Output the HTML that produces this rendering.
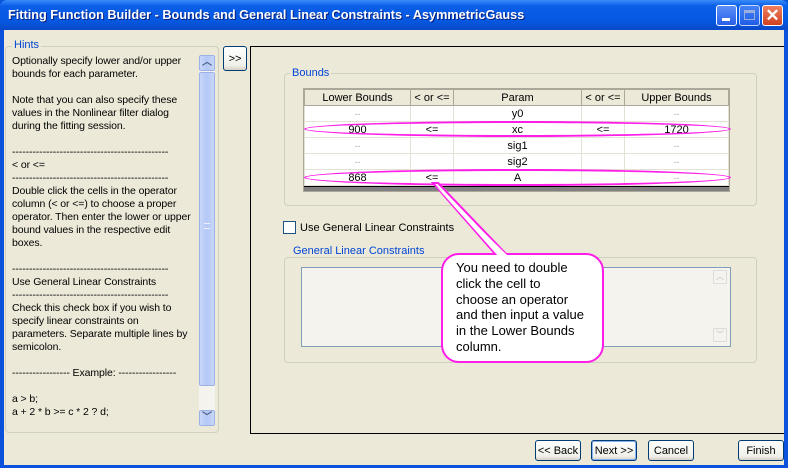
<!DOCTYPE html>
<html><head><meta charset="utf-8"><style>
*{box-sizing:border-box;margin:0;padding:0}
body{width:788px;height:468px;overflow:hidden;background:#0a52dc;font-family:"Liberation Sans",sans-serif;font-size:11px;color:#000;position:relative}
.a{position:absolute}
#title{left:0;top:0;width:788px;height:30px;background:linear-gradient(#3a8cf8,#0a5ee8 20%,#0558e0 70%,#0a48c8);border-radius:7px 7px 0 0}
#client{left:4px;top:30px;width:780px;height:435px;background:#ece9d8}
.grp{border:1px solid #d0d0bf;border-radius:4px}
.lbl{background:#ece9d8;color:#0046d5;padding:0 2px;font-size:11px;line-height:12px}
.btn{border:1px solid #003c74;border-radius:3px;background:linear-gradient(#fff,#f0f0ea 80%,#d6d0c5);font-size:11px;display:flex;align-items:center;justify-content:center}
.sb{background:linear-gradient(90deg,#c8d6f8,#b4c8f6 50%,#c8d6f8);border:1px solid #9cb2e6;border-radius:2px}
table{border-collapse:collapse;font-size:11px}
td{border:1px solid #e4e2d5;height:16px;text-align:center;line-height:14px;padding:0}
th{font-weight:normal;background:#ece9d8;border:1px solid #aca899;height:16px;line-height:14px;border-bottom:1px solid #aca899}
.d{color:#b0b0b0;font-size:9px}
.ttl{color:#fff;font-weight:bold;font-size:12.7px;left:8px;top:8px;text-shadow:1px 1px #0a1e7a}
.tb{top:5px;width:21px;height:21px;border:1px solid #fff;border-radius:3px}
</style></head><body>
<div id="title" class="a"></div>
<div class="a ttl">Fitting Function Builder - Bounds and General Linear Constraints - AsymmetricGauss</div>
<div class="a tb" style="left:716px;background:linear-gradient(#5a8ef8,#2860e8)"><div class="a" style="left:5px;top:12px;width:8px;height:3px;background:#fff"></div></div>
<div class="a tb" style="left:739px;background:linear-gradient(#5a8ef8,#2860e8);opacity:.75"><div class="a" style="left:4px;top:4px;width:11px;height:10px;border:1px solid #ccd;border-top-width:3px"></div></div>
<div class="a tb" style="left:762px;background:linear-gradient(#f08060,#d04020);color:#fff;font-size:17px;font-weight:bold;text-align:center;line-height:19px">✕</div>
<div id="client" class="a"></div>

<!-- Hints -->
<div class="a grp" style="left:5px;top:46px;width:214px;height:387px"></div>
<div class="a lbl" style="left:12px;top:39px">Hints</div>
<div class="a" style="left:12px;top:55px;width:186px;line-height:13px;font-size:10.5px;letter-spacing:-0.1px;white-space:pre;overflow:hidden;height:370px">Optionally specify lower and/or upper
bounds for each parameter.

Note that you can also specify these
values in the Nonlinear filter dialog
during the fitting session.

----------------------------------------------
&lt; or &lt;=
----------------------------------------------
Double click the cells in the operator
column (&lt; or &lt;=) to choose a proper
operator. Then enter the lower or upper
bound values in the respective edit
boxes.

----------------------------------------------
Use General Linear Constraints
----------------------------------------------
Check this check box if you wish to
specify linear constraints on
parameters. Separate multiple lines by
semicolon.

----------------- Example: -----------------

a &gt; b;
a + 2 * b &gt;= c * 2 ? d;</div>
<div class="a" style="left:199px;top:55px;width:16px;height:371px;background:#f4f3ee"></div>
<div class="a sb" style="left:199px;top:55px;width:16px;height:16px;text-align:center;color:#4d6185;font-size:10px;line-height:14px;font-weight:bold">︿</div>
<div class="a sb" style="left:199px;top:72px;width:16px;height:314px"><div class="a" style="left:4px;top:150px;width:6px;height:6px;border-top:1px solid #eef;border-bottom:1px solid #eef"></div></div>
<div class="a sb" style="left:199px;top:410px;width:16px;height:16px;text-align:center;color:#4d6185;font-size:10px;line-height:14px;font-weight:bold">﹀</div>

<div class="a btn" style="left:223px;top:46px;width:24px;height:25px">&gt;&gt;</div>

<!-- right panel -->
<div class="a" style="left:250px;top:46px;width:534px;height:388px;border:1px solid #000;border-right:none"></div>
<div class="a grp" style="left:284px;top:73px;width:473px;height:133px"></div>
<div class="a lbl" style="left:290px;top:67px">Bounds</div>
<div class="a" style="left:303px;top:88px;width:427px;height:104px;background:#808080;border:1px solid #aca899">
<table style="width:425px;background:#fff">
<tr><th style="width:106px">Lower Bounds</th><th style="width:43px">&lt; or &lt;=</th><th style="width:128px">Param</th><th style="width:43px">&lt; or &lt;=</th><th>Upper Bounds</th></tr>
<tr><td class="d">--</td><td></td><td>y0</td><td></td><td class="d">--</td></tr>
<tr><td>900</td><td>&lt;=</td><td>xc</td><td>&lt;=</td><td>1720</td></tr>
<tr><td class="d">--</td><td></td><td>sig1</td><td></td><td class="d">--</td></tr>
<tr><td class="d">--</td><td></td><td>sig2</td><td></td><td class="d">--</td></tr>
<tr><td>868</td><td>&lt;=</td><td>A</td><td></td><td class="d">--</td></tr>
</table>
<div style="height:1px;background:#000"></div>
</div>
<div class="a" style="left:304px;top:121px;width:427px;height:16px;border:2px solid #ff1ee8;border-radius:50%"></div>
<div class="a" style="left:304px;top:169px;width:427px;height:17px;border:2px solid #ff1ee8;border-radius:50%"></div>

<div class="a" style="left:283px;top:221px;width:13px;height:13px;border:1px solid #1c5180;background:#fff"></div>
<div class="a" style="left:300px;top:222px">Use General Linear Constraints</div>

<div class="a grp" style="left:284px;top:257px;width:473px;height:106px"></div>
<div class="a lbl" style="left:291px;top:245px">General Linear Constraints</div>
<div class="a" style="left:301px;top:267px;width:430px;height:80px;border:1px solid #7f9db9;background:#f4f3ee"></div>
<div class="a" style="left:713px;top:270px;width:14px;height:14px;border:1px solid #ddd;color:#bbb;font-size:8px;text-align:center">︿</div>
<div class="a" style="left:713px;top:328px;width:14px;height:14px;border:1px solid #ddd;color:#bbb;font-size:8px;text-align:center">﹀</div>

<!-- callout -->
<svg class="a" style="left:0;top:0" width="788" height="468">
<polygon points="433,183 438,183 508,256 497,256" fill="#fff" stroke="#ff1ee8" stroke-width="2"/>
</svg>
<div class="a" style="left:441px;top:253px;width:163px;height:110px;border:2px solid #ff1ee8;border-radius:18px;background:#fff"></div>
<svg class="a" style="left:0;top:0" width="788" height="468"><polygon points="435,185 498,256 508,256" fill="#fff"/></svg>
<div class="a" style="left:456px;top:260px;font-size:13px;line-height:15.8px">You need to double<br>click the cell to<br>choose an operator<br>and then input a value<br>in the Lower Bounds<br>column.</div>

<!-- buttons -->
<div class="a btn" style="left:535px;top:440px;width:46px;height:21px">&lt;&lt; Back</div>
<div class="a btn" style="left:591px;top:440px;width:46px;height:21px;box-shadow:inset 0 0 0 1px #8ab0f0">Next &gt;&gt;</div>
<div class="a btn" style="left:648px;top:440px;width:46px;height:21px">Cancel</div>
<div class="a btn" style="left:738px;top:440px;width:46px;height:21px">Finish</div>
</body></html>
